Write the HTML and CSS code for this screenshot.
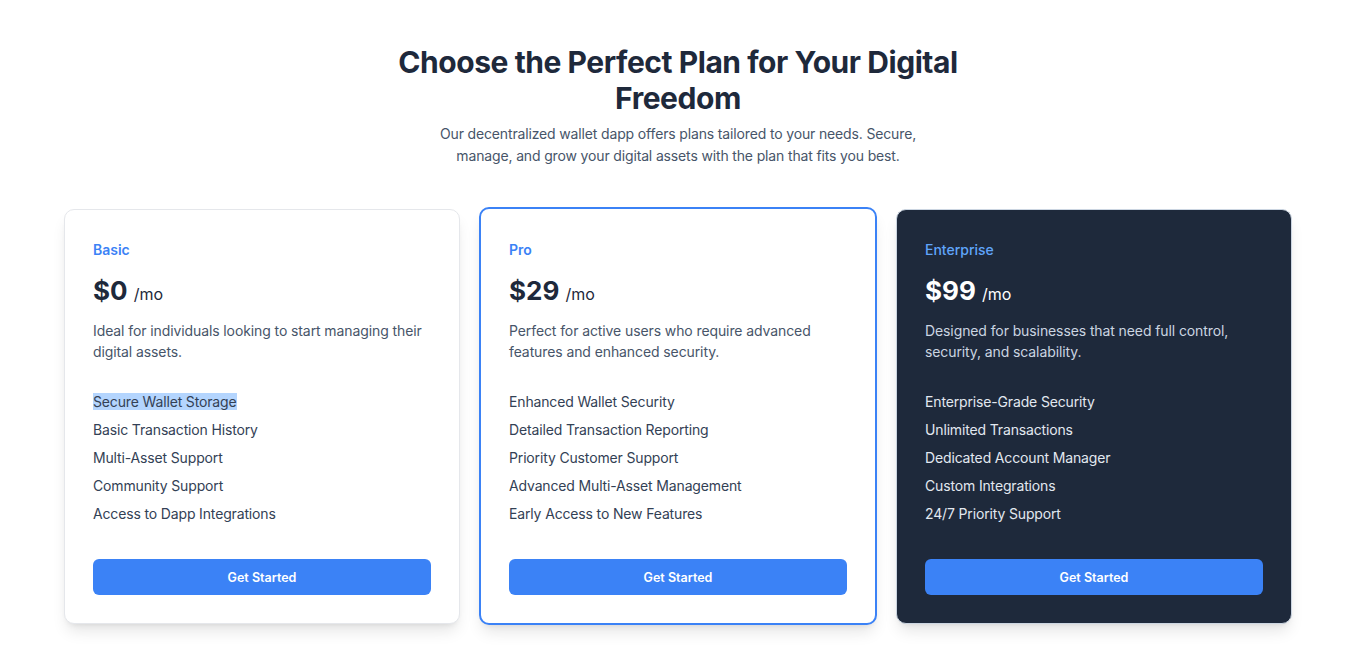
FILE: index.html
```html
<!DOCTYPE html>
<html lang="en">
<head>
    <meta charset="UTF-8">
    <meta name="viewport" content="width=device-width, initial-scale=1.0">
    <title>Pricing Plans</title>
    <link rel="stylesheet" href="styles.css">
</head>
<body>
    <section class="pricing">
        <div class="pricing-header">
            <h1>Choose the Perfect Plan for Your Digital Freedom</h1>
            <p>Our decentralized wallet dapp offers plans tailored to your needs. Secure, manage, and grow your digital assets with the plan that fits you best.</p>
        </div>

        <div class="plans">
            <div class="plan">
                <h3 class="plan-name">Basic</h3>
                <div class="plan-price">$0 <span>/mo</span></div>
                <p class="plan-desc">Ideal for individuals looking to start managing their digital assets.</p>
                <ul class="plan-features">
                    <li><span class="selected">Secure Wallet Storage</span></li>
                    <li>Basic Transaction History</li>
                    <li>Multi-Asset Support</li>
                    <li>Community Support</li>
                    <li>Access to Dapp Integrations</li>
                </ul>
                <button type="button" class="plan-btn">Get Started</button>
            </div>

            <div class="plan featured">
                <h3 class="plan-name">Pro</h3>
                <div class="plan-price">$29 <span>/mo</span></div>
                <p class="plan-desc">Perfect for active users who require advanced features and enhanced security.</p>
                <ul class="plan-features">
                    <li>Enhanced Wallet Security</li>
                    <li>Detailed Transaction Reporting</li>
                    <li>Priority Customer Support</li>
                    <li>Advanced Multi-Asset Management</li>
                    <li>Early Access to New Features</li>
                </ul>
                <button type="button" class="plan-btn">Get Started</button>
            </div>

            <div class="plan dark">
                <h3 class="plan-name">Enterprise</h3>
                <div class="plan-price">$99 <span>/mo</span></div>
                <p class="plan-desc">Designed for businesses that need full control, security, and scalability.</p>
                <ul class="plan-features">
                    <li>Enterprise-Grade Security</li>
                    <li>Unlimited Transactions</li>
                    <li>Dedicated Account Manager</li>
                    <li>Custom Integrations</li>
                    <li>24/7 Priority Support</li>
                </ul>
                <button type="button" class="plan-btn">Get Started</button>
            </div>
        </div>
    </section>
</body>
</html>
```

FILE: styles.css
```css
* {
    margin: 0;
    padding: 0;
    box-sizing: border-box;
}

body {
    background-color: white;
    font-family: Inter, 'Noto Sans', sans-serif;
    color: #1e293b;
}

.pricing {
    padding: 44px 64px 40px;
}

.pricing-header {
    text-align: center;
    margin: 0 auto 42px;
}

.pricing-header h1 {
    max-width: 580px;
    margin: 0 auto 7px;
    font-size: 30px;
    line-height: 36px;
    font-weight: 700;
    letter-spacing: -0.45px;
    color: #1e293b;
}

.pricing-header p {
    max-width: 490px;
    margin: 0 auto;
    font-size: 14px;
    line-height: 22px;
    letter-spacing: -0.15px;
    color: #475569;
}

.plans {
    display: grid;
    grid-template-columns: repeat(3, 1fr);
    gap: 20px;
    width: 1228px;
}

.plan {
    display: flex;
    flex-direction: column;
    padding: 30px 28px 28px;
    border: 1px solid #e5e7eb;
    border-radius: 10px;
    background-color: white;
    box-shadow: 0 10px 15px -3px rgba(0, 0, 0, 0.1), 0 4px 6px -4px rgba(0, 0, 0, 0.1);
}

.plan.featured {
    border: 2px solid #3b82f6;
    margin: -2px -1px -1px;
    padding-top: 31px;
}

.plan.dark {
    background-color: #1e293b;
    border-color: #cbd5e1;
}

.plan-name {
    font-size: 14px;
    line-height: 20px;
    font-weight: 600;
    color: #3b82f6;
    margin-bottom: 13px;
}

.plan.dark .plan-name {
    color: #60a5fa;
    font-weight: 500;
}

.plan-price {
    font-size: 26px;
    line-height: 36px;
    font-weight: 700;
    color: #1e293b;
    margin-bottom: 8px;
}

.plan-price span {
    font-size: 16px;
    font-weight: 400;
}

.plan.dark .plan-price {
    color: white;
}

.plan-desc {
    font-size: 14px;
    line-height: 21px;
    letter-spacing: -0.1px;
    color: #475569;
    margin-bottom: 30px;
}

.plan.dark .plan-desc {
    color: #cbd5e1;
}

.plan-features {
    list-style: none;
    margin-bottom: 35px;
}

.plan-features li {
    font-size: 14px;
    line-height: 20px;
    letter-spacing: -0.15px;
    color: #334155;
    margin-bottom: 8px;
}

.plan-features li:last-child {
    margin-bottom: 0;
}

.plan.dark .plan-features li {
    color: #e2e8f0;
}

.selected {
    background-color: #b4d5fe;
}

.plan-btn {
    margin-top: auto;
    width: 100%;
    height: 36px;
    border: none;
    border-radius: 6px;
    background-color: #3b82f6;
    color: white;
    font-family: inherit;
    font-size: 12.5px;
    font-weight: 600;
    cursor: pointer;
}

.plan-btn:hover {
    background-color: #2563eb;
}
```
